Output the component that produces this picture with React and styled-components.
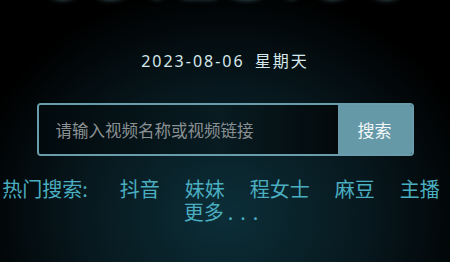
import styled, { createGlobalStyle } from 'styled-components';

const GlobalStyle = createGlobalStyle`
  html, body {
    margin: 0;
    padding: 0;
    background: #000;
  }
  body {
    font-family: "Noto Sans", "Noto Sans CJK SC", sans-serif;
  }
`;

const Page = styled.div`
  width: 450px;
  height: 262px;
  overflow: hidden;
  background: radial-gradient(ellipse 260px 230px at 225px 215px, #0c2e38 0%, #07181e 55%, #000 100%);
  display: flex;
  flex-direction: column;
  align-items: center;
`;

const Clock = styled.div`
  margin-top: -63px;
  height: 66px;
  font-family: "DejaVu Sans", sans-serif;
  font-size: 80px;
  line-height: 66px;
  letter-spacing: 2px;
  color: #dff6ff;
  text-shadow: 0 0 6px rgba(160, 230, 255, 0.8);
`;

const DateLine = styled.div`
  margin-top: 49px;
  font-size: 16px;
  line-height: 18px;
  letter-spacing: 2px;
  color: #d6e8ec;
  word-spacing: 4px;
`;

const SearchBox = styled.form`
  margin-top: 33px;
  width: 373px;
  height: 49px;
  display: flex;
  border: 2px solid #6a9dab;
  border-radius: 4px;
  overflow: hidden;
`;

const Input = styled.input`
  flex: 1;
  min-width: 0;
  border: none;
  outline: none;
  padding: 0 0 0 17px;
  background: linear-gradient(90deg, #020a0d 0%, #081c22 60%, #03090b 100%);
  font-family: "Noto Sans CJK SC", sans-serif;
  font-size: 16.5px;
  color: #ccc;
  &::placeholder {
    color: #8b9093;
  }
`;

const SearchButton = styled.button`
  width: 74px;
  border: none;
  background: #6699a8;
  color: #f2f7f8;
  font-family: "Noto Sans CJK SC", sans-serif;
  font-size: 17px;
`;

const HotList = styled.div`
  margin-top: 21px;
  width: 442px;
  padding-right: 8px;
  display: flex;
  flex-wrap: wrap;
  justify-content: center;
  column-gap: 25px;
  font-family: "Noto Sans CJK SC", sans-serif;
  font-size: 20px;
  line-height: 23px;
  color: #4aaec0;
`;

const HotLabel = styled.span`
  margin-right: 7px;
`;

const HotItem = styled.span`
  white-space: nowrap;
  padding-left: ${p => (p.$more ? '7px' : '0')};
`;

const Dots = styled.span`
  margin-left: 4px;
  letter-spacing: 7px;
`;

const hot = ['抖音', '妹妹', '程女士', '麻豆', '主播'];

export default function App() {
  return (
    <>
      <GlobalStyle />
      <Page>
        <Clock>09:13:06</Clock>
        <DateLine>2023-08-06 星期天</DateLine>
        <SearchBox onSubmit={e => e.preventDefault()}>
          <Input placeholder="请输入视频名称或视频链接" />
          <SearchButton type="submit">搜索</SearchButton>
        </SearchBox>
        <HotList>
          <HotLabel>热门搜索:</HotLabel>
          {hot.map(h => (
            <HotItem key={h}>{h}</HotItem>
          ))}
          <HotItem $more>
            更多<Dots>...</Dots>
          </HotItem>
        </HotList>
      </Page>
    </>
  );
}
